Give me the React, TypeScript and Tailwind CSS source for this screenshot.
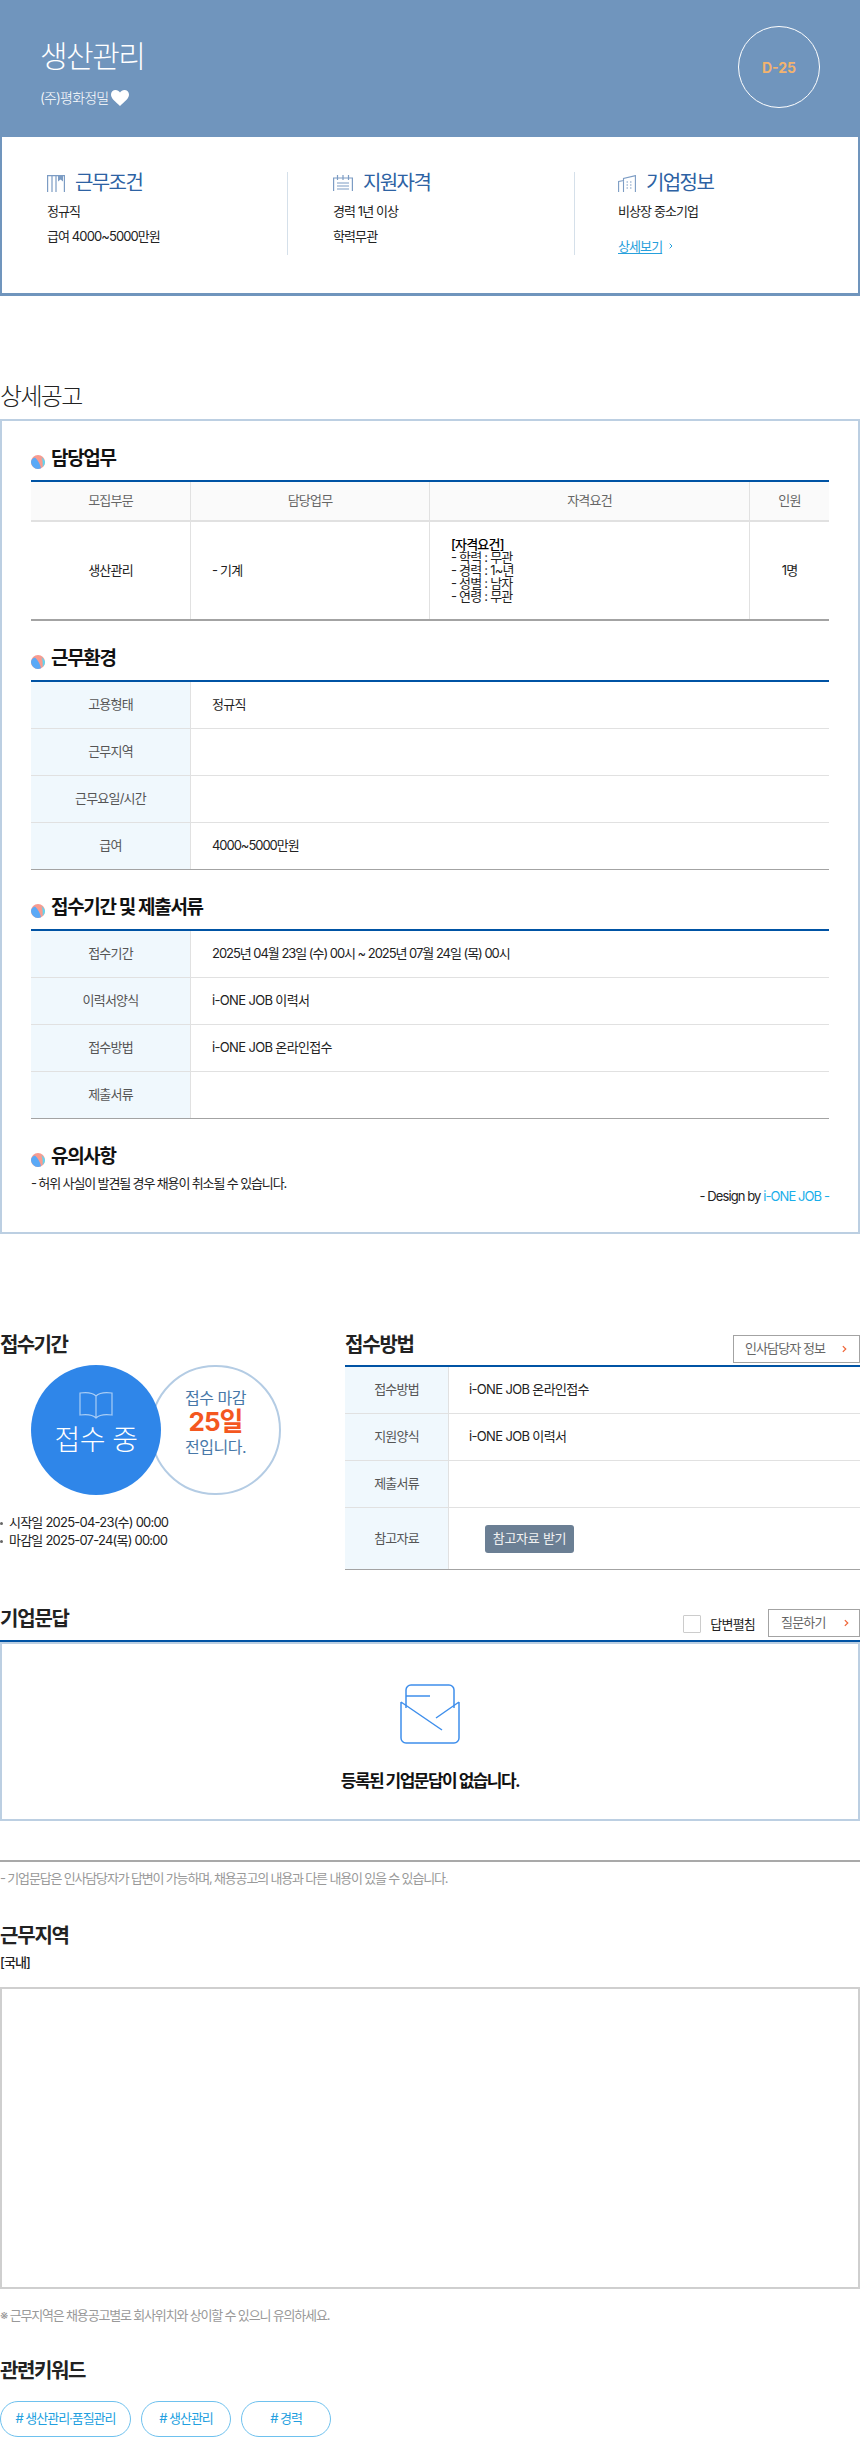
import React from 'react';

const font = "font-['Inter','Noto_Sans_CJK_KR',sans-serif]";

function Dot() {
  return (
    <svg width="14" height="14" viewBox="0 0 14 14" className="shrink-0">
      <circle cx="7" cy="7" r="7" fill="#f99b8f" />
      <path d="M4 2.5 C1.5 3 0 5 0 7 C0 10.5 3.5 14 7 14 C9 14 10 13 10 13 C9 9 7 5 4 2.5Z" fill="#5aa9f7" />
      <path d="M10.5 2 C12.8 4 14 5.6 14 7 C14 9 13 10.6 11.6 12 C12 8 11.6 5 10.5 2Z" fill="#5fd6f2" />
    </svg>
  );
}

function SectionTitle({ children }: { children: React.ReactNode }) {
  return (
    <div className="flex h-[44px] items-center">
      <span className="mt-[8px] mr-[6px] flex"><Dot /></span>
      <h3 className="text-[19px] font-bold leading-none tracking-[-0.07em] text-[#111]">{children}</h3>
    </div>
  );
}

function Row({ label, children, last, h = 'h-[47px]' }: { label: string; children?: React.ReactNode; last?: boolean; h?: string }) {
  return (
    <div className={`flex ${h} border-b ${last ? 'border-[#a3a3a3]' : 'border-[#e1e1e1]'}`}>
      <div className="flex w-[160px] shrink-0 items-center justify-center border-r border-[#e1e1e1] bg-[#f0f8fd] text-[13px] tracking-[-0.06em] text-[#555]">
        {label}
      </div>
      <div className="flex items-center pl-[21px] text-[13px] tracking-[-0.05em] text-[#222]">{children}</div>
    </div>
  );
}

function InfoRow({ label, children, h = 'h-[47px]', last }: { label: string; children?: React.ReactNode; h?: string; last?: boolean }) {
  return (
    <div className={`flex ${h} border-b ${last ? 'border-[#a3a3a3]' : 'border-[#e1e1e1]'}`}>
      <div className="flex w-[104px] shrink-0 items-center justify-center border-r border-[#e1e1e1] bg-[#f0f8fd] text-[13px] tracking-[-0.06em] text-[#555]">
        {label}
      </div>
      <div className="flex items-center pl-[20px] text-[13px] tracking-[-0.05em] text-[#222]">{children}</div>
    </div>
  );
}

function Chevron({ color = '#f0673a', small }: { color?: string; small?: boolean }) {
  return (
    <svg width={small ? 4 : 5} height={small ? 6 : 8} viewBox="0 0 6 9" fill="none">
      <path d="M1 1l3.5 3.5L1 8" stroke={color} strokeWidth="1.5" />
    </svg>
  );
}

function Summary({ icon, title, lines, extra, divider }: { icon: React.ReactNode; title: string; lines: string[]; extra?: React.ReactNode; divider?: boolean }) {
  return (
    <div className={`h-[83px] ${divider ? 'border-r border-[#d5e0ea]' : ''}`}>
      <div className="flex h-[22px] items-center gap-[10px] text-[20px] tracking-[-0.08em] text-[#2d62a3]">
        {icon}
        <span>{title}</span>
      </div>
      <div className="mt-[5px] text-[13px] leading-[25px] tracking-[-0.07em] text-[#222]">
        {lines.map(l => <p key={l}>{l}</p>)}
        {extra}
      </div>
    </div>
  );
}

export default function App() {
  return (
    <div className={`${font} h-[2439px] w-[860px] overflow-hidden bg-white`}>
      <header className="flex h-[137px] items-start justify-between bg-[#7095bd] pl-[40px] pr-[40px] text-white">
        <div className="pt-[38px]">
          <h1 className="text-[30px] font-light leading-[36px] tracking-[-0.05em]">생산관리</h1>
          <div className="mt-[13px] flex items-center gap-[3px] text-[14px] font-light tracking-[-0.06em]">
            <span>(주)평화정밀</span>
            <svg width="18" height="16" viewBox="0 0 18 16"><path d="M9 16C4 11.500 0 8.500 0 4.600 0 2 2 0 4.600 0 6.400 0 8 1 9 2.600 10 1 11.600 0 13.400 0 16 0 18 2 18 4.600 18 8.500 14 11.500 9 16Z" fill="#fff" /></svg>
          </div>
        </div>
        <div className="mt-[26px] flex h-[82px] w-[82px] items-center justify-center rounded-full border border-white text-[14px] font-bold text-[#f3b36e]">D-25</div>
      </header>

      <section className="grid h-[159px] grid-cols-[286px_287px_1fr] border-x-2 border-b-[3px] border-[#7095bd] pt-[35px]">
        <div className="pl-[45px]">
          <Summary
            divider
            title="근무조건"
            lines={['정규직', '급여 4000~5000만원']}
            icon={
              <svg width="18" height="18" viewBox="0 0 18 18" fill="none" stroke="#7c9cc4" strokeWidth="1.2">
                <path d="M.6 18V1.600h16.800V18M5 18V1.600M9 1.600V18" />
                <path d="M11 1.600h5v6l-2.500-2-2.500 2z" fill="#7c9cc4" stroke="none" />
              </svg>
            }
          />
        </div>
        <div className="pl-[45px]">
          <Summary
            divider
            title="지원자격"
            lines={['경력 1년 이상', '학력무관']}
            icon={
              <svg width="20" height="16" viewBox="0 0 20 16" fill="none" stroke="#7c9cc4" strokeWidth="1.2">
                <path d="M.6 16V3h18.800v13M4.500 0v5M10 0v5M15.500 0v5M4 8h12M4 11h12M4 14h12" />
              </svg>
            }
          />
        </div>
        <div className="pl-[43px]">
          <Summary
            title="기업정보"
            lines={['비상장 중소기업']}
            extra={
              <a className="mt-[12px] flex items-center gap-[7px] leading-[20px] text-[#27a0dc]">
                <span className="underline underline-offset-2">상세보기</span>
                <Chevron color="#27a0dc" small />
              </a>
            }
            icon={
              <svg width="18" height="17" viewBox="0 0 18 17" fill="none" stroke="#7c9cc4" strokeWidth="1.1">
                <path d="M.6 17V6.500L6 5.500M5.500 17V3.500L17.400.6V17" />
                <path d="M8.500 7h1.500M12 7h1.500M8.500 10h1.500M12 10h1.500M8.500 13h1.500M12 13h1.500" />
              </svg>
            }
          />
        </div>
      </section>

      <h2 className="mt-[83px] h-[40px] text-[24px] font-light leading-[36px] tracking-[-0.07em] text-[#222]">상세공고</h2>

      <section className="h-[815px] border-2 border-[#bccfe2] px-[29px] pt-[15px]">
        <SectionTitle>담당업무</SectionTitle>
        <div className="border-t-2 border-[#0053a4] text-[13px] tracking-[-0.06em]">
          <div className="grid h-[40px] grid-cols-[160px_239px_320px_1fr] items-stretch border-b-2 border-[#e1e1e1] bg-[#fafafa] text-center text-[#666]">
            <div className="flex items-center justify-center border-r border-[#e1e1e1]">모집부문</div>
            <div className="flex items-center justify-center border-r border-[#e1e1e1]">담당업무</div>
            <div className="flex items-center justify-center border-r border-[#e1e1e1]">자격요건</div>
            <div className="flex items-center justify-center">인원</div>
          </div>
          <div className="grid h-[99px] grid-cols-[160px_239px_320px_1fr] border-b-2 border-[#a3a3a3] text-[#222]">
            <div className="flex items-center justify-center border-r border-[#e1e1e1]">생산관리</div>
            <div className="flex items-center border-r border-[#e1e1e1] pl-[21px]">- 기계</div>
            <div className="flex flex-col justify-center border-r border-[#e1e1e1] pl-[21px] leading-[13px]">
              <b className="font-medium text-black">[자격요건]</b>
              <span>- 학력 : 무관</span>
              <span>- 경력 : 1~년</span>
              <span>- 성별 : 남자</span>
              <span>- 연령 : 무관</span>
            </div>
            <div className="flex items-center justify-center">1명</div>
          </div>
        </div>

        <div className="mt-[15px]"><SectionTitle>근무환경</SectionTitle></div>
        <div className="border-t-2 border-[#0053a4]">
          <Row label="고용형태">정규직</Row>
          <Row label="근무지역" />
          <Row label="근무요일/시간" />
          <Row label="급여" last><span className="tracking-[-0.08em]">4000~5000만원</span></Row>
        </div>

        <div className="mt-[15px]"><SectionTitle>접수기간 및 제출서류</SectionTitle></div>
        <div className="border-t-2 border-[#0053a4]">
          <Row label="접수기간"><span className="tracking-[-0.08em]">2025년 04월 23일 (수) 00시 ~ 2025년 07월 24일 (목) 00시</span></Row>
          <Row label="이력서양식">i-ONE JOB 이력서</Row>
          <Row label="접수방법">i-ONE JOB 온라인접수</Row>
          <Row label="제출서류" last />
        </div>

        <div className="mt-[15px]"><SectionTitle>유의사항</SectionTitle></div>
        <p className="-mt-[5px] text-[13px] leading-[20px] tracking-[-0.087em] text-[#222]">- 허위 사실이 발견될 경우 채용이 취소될 수 있습니다.</p>
        <p className="-mt-[7px] text-right text-[13px] leading-[20px] tracking-[-0.07em] text-[#222]">- Design by <span className="text-[#19aeea]">i-ONE JOB -</span></p>
      </section>

      <section className="mt-[95px] flex h-[240px]">
        <div className="w-[345px] shrink-0">
          <h2 className="h-[32px] text-[20px] font-bold leading-[32px] tracking-[-0.08em] text-[#222]">접수기간</h2>
          <div className="mt-[4px] flex pl-[31px]">
            <div className="z-10 flex h-[130px] w-[130px] flex-col items-center rounded-full bg-[#2f86e9] pt-[26px] text-white">
              <svg width="34" height="28" viewBox="0 0 34 28" fill="none" stroke="#a9cdf5" strokeWidth="1.2">
                <path d="M17 5C14 2 8 1 1 2v22c7-1 13 0 16 3 3-3 9-4 16-3V2C26 1 20 2 17 5zM17 5v22" />
              </svg>
              <span className="mt-[2px] text-[28px] font-light leading-[38px] tracking-[-0.02em]">접수 중</span>
            </div>
            <div className="-ml-[11px] flex h-[130px] w-[131px] flex-col items-center justify-center rounded-full border-2 border-[#b4cce4] pb-[14px] text-[#4878a8]">
              <span className="text-[16px] leading-[22px] tracking-[-0.03em]">접수 마감</span>
              <span className="text-[26px] font-bold leading-[26px] tracking-[-0.04em] text-[#f4571f]">25일</span>
              <span className="text-[16px] leading-[24px] tracking-[-0.03em]">전입니다.</span>
            </div>
          </div>
          <ul className="mt-[18px] text-[13px] leading-[18px] tracking-[-0.06em] text-[#222]">
            <li className="flex items-center gap-[6px]"><span className="mt-[3px] h-[3px] w-[3px] rounded-full bg-[#666]" />시작일 2025-04-23(수) 00:00</li>
            <li className="flex items-center gap-[6px]"><span className="mt-[3px] h-[3px] w-[3px] rounded-full bg-[#666]" />마감일 2025-07-24(목) 00:00</li>
          </ul>
        </div>
        <div className="flex-1">
          <div className="flex h-[32px] items-start justify-between">
            <h2 className="text-[20px] font-bold leading-[32px] tracking-[-0.06em] text-[#222]">접수방법</h2>
            <button className="mt-[6px] flex h-[28px] w-[127px] shrink-0 items-center justify-between border border-[#a3a3a3] pl-[11px] pr-[12px] text-[13px] tracking-[-0.07em] text-[#666]">
              인사담당자 정보
              <Chevron />
            </button>
          </div>
          <div className="mt-[4px] border-t-2 border-[#0053a4]">
            <InfoRow label="접수방법">i-ONE JOB 온라인접수</InfoRow>
            <InfoRow label="지원양식">i-ONE JOB 이력서</InfoRow>
            <InfoRow label="제출서류" />
            <InfoRow label="참고자료" h="h-[62px]" last>
              <button className="ml-[16px] h-[28px] w-[89px] rounded-[3px] bg-[#6b7f94] text-[13px] tracking-[-0.02em] text-[#f2f2f2]">참고자료 받기</button>
            </InfoRow>
          </div>
        </div>
      </section>

      <section className="mt-[40px]">
        <div className="flex h-[31px] items-start justify-between">
          <h2 className="mt-[-6px] text-[20px] font-bold leading-[32px] tracking-[-0.06em] text-[#222]">기업문답</h2>
          <div className="flex items-start">
            <span className="mt-[6px] h-[18px] w-[18px] rounded-[1px] border border-[#ccc] bg-white" />
            <span className="ml-[9px] mt-[6px] text-[13px] leading-[18px] tracking-[-0.06em] text-[#222]">답변펼침</span>
            <button className="ml-[13px] flex h-[28px] w-[92px] items-center justify-between border border-[#a3a3a3] pl-[12px] pr-[10px] text-[13px] tracking-[-0.06em] text-[#666]">
              질문하기
              <Chevron />
            </button>
          </div>
        </div>
        <div className="h-[2px] bg-[#0053a4]" />
        <div className="flex h-[179px] flex-col items-center border-2 border-[#bccfe2] pt-[40px]">
          <svg width="60" height="60" viewBox="0 0 60 60" fill="none" stroke="#3f8fec" strokeWidth="1.5">
            <path d="M6 24V6a5 5 0 0 1 5-5h38a5 5 0 0 1 5 5v18M6 12h24" />
            <path d="M1 18v36a5 5 0 0 0 5 5h48a5 5 0 0 0 5-5V18M1 18l41 28M59 18L36 34" />
          </svg>
          <p className="mt-[24px] text-[17px] font-bold leading-[26px] tracking-[-0.09em] text-[#111]">등록된 기업문답이 없습니다.</p>
        </div>
      </section>

      <div className="mt-[39px] border-t-2 border-[#a9a9a9] pt-[6px] text-[13px] leading-[20px] tracking-[-0.09em] text-[#999]">
        - 기업문답은 인사담당자가 답변이 가능하며, 채용공고의 내용과 다른 내용이 있을 수 있습니다.
      </div>

      <h2 className="mt-[32px] h-[32px] text-[20px] font-bold leading-[32px] tracking-[-0.06em] text-[#222]">근무지역</h2>
      <p className="h-[20px] text-[13px] font-medium leading-[20px] tracking-[-0.07em] text-[#222]">[국내]</p>
      <div className="mt-[15px] h-[302px] border-2 border-[#cfcfcf]" />
      <p className="mt-[16px] h-[20px] text-[13px] leading-[20px] tracking-[-0.09em] text-[#999]">※ 근무지역은 채용공고별로 회사위치와 상이할 수 있으니 유의하세요.</p>

      <h2 className="mt-[30px] h-[32px] text-[20px] font-bold leading-[32px] tracking-[-0.07em] text-[#222]">관련키워드</h2>
      <div className="mt-[14px] flex gap-[10px]">
        {[['# 생산관리·품질관리', 'w-[131px]'], ['# 생산관리', 'w-[90px]'], ['# 경력', 'w-[90px]']].map(([t, w]) => (
          <span key={t} className={`flex h-[36px] ${w} items-center justify-center rounded-full border border-[#6ec1ee] text-[13px] tracking-[-0.08em] text-[#229fe0]`}>{t}</span>
        ))}
      </div>
    </div>
  );
}
